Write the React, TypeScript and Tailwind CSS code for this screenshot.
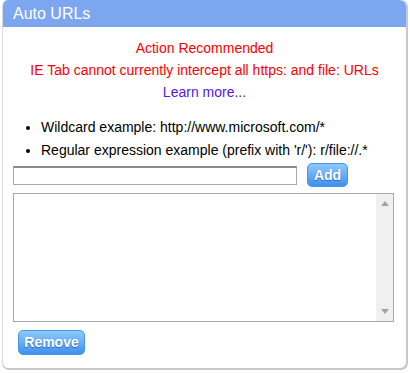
import React from "react";

export default function App() {
  const font = { fontFamily: "'Liberation Sans', Arial, sans-serif" };
  return (
    <div className="w-[410px] h-[373px] bg-white relative" style={font}>
      <div className="absolute left-[2px] top-0 w-[406px] h-[370px] rounded-[7px] bg-[#c8c8c8]" />
      <div className="relative ml-[2px] w-[404px] h-[368px] rounded-[6px] bg-white border-l border-[#dcdcdc] flex flex-col overflow-hidden">
        <div className="h-[27px] bg-[#7ca7f0] rounded-tr-[6px] flex items-center pl-[10px] text-white text-[16px] leading-none">
          Auto URLs
        </div>
        <div className="flex flex-col items-center mt-[10px] text-[14px] leading-[22px]">
          <div className="text-[#ff0000]">Action Recommended</div>
          <div className="text-[#ff0000]">IE Tab cannot currently intercept all https: and file: URLs</div>
          <div className="text-[#5a14ee]">Learn more...</div>
        </div>
        <ul className="mt-[13px] ml-[25px] text-[14px] leading-[23px] text-black list-disc pl-[13px]">
          <li>Wildcard example: http://www.microsoft.com/*</li>
          <li>Regular expression example (prefix with 'r/'): r/file://.*</li>
        </ul>
        <div className="flex items-center mt-[1px] ml-[10px]">
          <div className="w-[284px] h-[19px] border border-[#a9a9a9] border-t-2 border-t-[#8a8a8a] bg-white" />
          <button className="ml-[10px] w-[41px] h-[24px] rounded-[5px] border border-[#4c95e6] bg-gradient-to-b from-[#8cc9ff] to-[#3d91f0] text-white text-[14px] font-bold [text-shadow:0_1px_1px_rgba(0,0,80,0.4)]">
            Add
          </button>
        </div>
        <div className="mt-[6px] ml-[10px] w-[381px] h-[129px] border border-[#a8a8a8] bg-white flex justify-end">
          <div className="w-[17px] h-full bg-[#f0f0f0] flex flex-col items-center justify-between py-[7px]">
            <svg width="8" height="5" viewBox="0 0 8 5"><path d="M4 0 L8 5 L0 5 Z" fill="#a3a3a3" /></svg>
            <svg width="8" height="5" viewBox="0 0 8 5"><path d="M0 0 L8 0 L4 5 Z" fill="#a3a3a3" /></svg>
          </div>
        </div>
        <div className="mt-[8px] ml-[15px]">
          <button className="w-[67px] h-[25px] rounded-[5px] border border-[#4c95e6] bg-gradient-to-b from-[#8cc9ff] to-[#3d91f0] text-white text-[14px] font-bold [text-shadow:0_1px_1px_rgba(0,0,80,0.4)]">
            Remove
          </button>
        </div>
      </div>
    </div>
  );
}
